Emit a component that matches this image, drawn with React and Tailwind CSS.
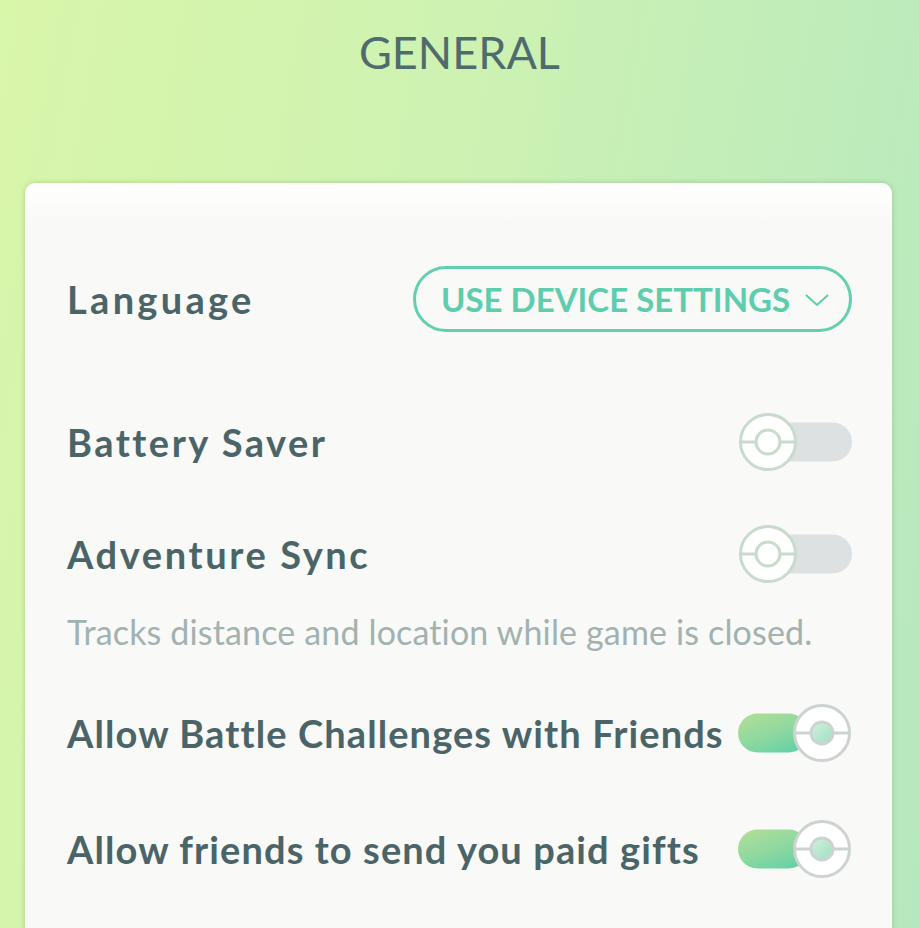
import React from "react";

function Knob({ on }) {
  const stroke = on ? "#cdd3d0" : "#c8dbcc";
  return (
    <svg width="60" height="60" viewBox="0 0 60 60" className="absolute top-1/2 -translate-y-1/2" style={on ? { right: 0 } : { left: 0 }}>
      <defs>
        <linearGradient id="ing" x1="0" y1="0" x2="1" y2="1">
          <stop offset="0" stopColor="#d2f1dc" />
          <stop offset="1" stopColor="#9fdfc2" />
        </linearGradient>
      </defs>
      <circle cx="30" cy="30" r="27.5" fill="#ffffff" stroke={stroke} strokeWidth="3" />
      <line x1="3" y1="30" x2="57" y2="30" stroke={stroke} strokeWidth="3" />
      <circle cx="30" cy="30" r={on ? 11 : 12} fill={on ? "url(#ing)" : "#ffffff"} stroke={stroke} strokeWidth="3" />
    </svg>
  );
}

function Toggle({ on }) {
  return (
    <div className="relative w-[114px] h-[60px] shrink-0">
      {on ? (
        <div className="absolute left-0 top-1/2 -translate-y-1/2 w-[70px] h-[39px] rounded-full bg-[linear-gradient(160deg,#b3df96_0%,#8fd8a0_50%,#5bcfa8_100%)]" />
      ) : (
        <div className="absolute right-0 top-1/2 -translate-y-1/2 w-[90px] h-[39px] rounded-full bg-[#dde1e2]" />
      )}
      <Knob on={on} />
    </div>
  );
}

export default function App() {
  return (
    <div
      className="w-[919px] h-[928px] overflow-hidden bg-[linear-gradient(100deg,#d9f6a9_0%,#cdf2b2_45%,#b6e8bf_100%)]"
      style={{ fontFamily: "Lato, 'Noto Sans', sans-serif" }}
    >
      <div className="h-[183px] flex justify-center pt-[26px]">
        <h1 className="text-[45px] leading-[52px] text-[#4f6b6d] font-normal">GENERAL</h1>
      </div>
      <div className="ml-[25px] w-[867px] h-[760px] rounded-[10px] bg-[linear-gradient(180deg,#ffffff_0px,#f9f9f7_40px)] shadow-[0_0_5px_rgba(90,130,80,0.35)] pl-[42px] pr-[40px] pt-[83px] text-[#4a6467]">
        <div className="h-[66px] flex items-center justify-between">
          <span className="text-[38px] font-bold tracking-[3.3px]">Language</span>
          <div className="w-[439px] h-[66px] rounded-full border-[3px] border-[#62cfb0] flex items-center pl-[25px] gap-[14px] text-[#5ecdad]">
            <span className="text-[33px] font-bold leading-none">USE DEVICE SETTINGS</span>
            <svg width="26" height="14" viewBox="0 0 26 14" className="mt-[2px]">
              <path d="M2 2 L13 12 L24 2" fill="none" stroke="#5ecdad" strokeWidth="2" />
            </svg>
          </div>
        </div>
        <div className="mt-[80px] h-[60px] flex items-center justify-between">
          <span className="text-[38px] font-bold tracking-[2.5px]">Battery Saver</span>
          <Toggle on={false} />
        </div>
        <div className="mt-[52px] h-[60px] flex items-center justify-between">
          <span className="text-[38px] font-bold tracking-[2.6px]">Adventure Sync</span>
          <Toggle on={false} />
        </div>
        <div className="mt-[28px] text-[34px] leading-[40px] tracking-[0.15px] text-[#a1b2b1]">Tracks distance and location while game is closed.</div>
        <div className="mt-[51px] h-[60px] flex items-center justify-between">
          <span className="text-[38px] font-bold tracking-[1.1px] whitespace-nowrap">Allow Battle Challenges with Friends</span>
          <Toggle on={true} />
        </div>
        <div className="mt-[56px] h-[60px] flex items-center justify-between">
          <span className="text-[38px] font-bold tracking-[1.1px] whitespace-nowrap">Allow friends to send you paid gifts</span>
          <Toggle on={true} />
        </div>
      </div>
    </div>
  );
}
